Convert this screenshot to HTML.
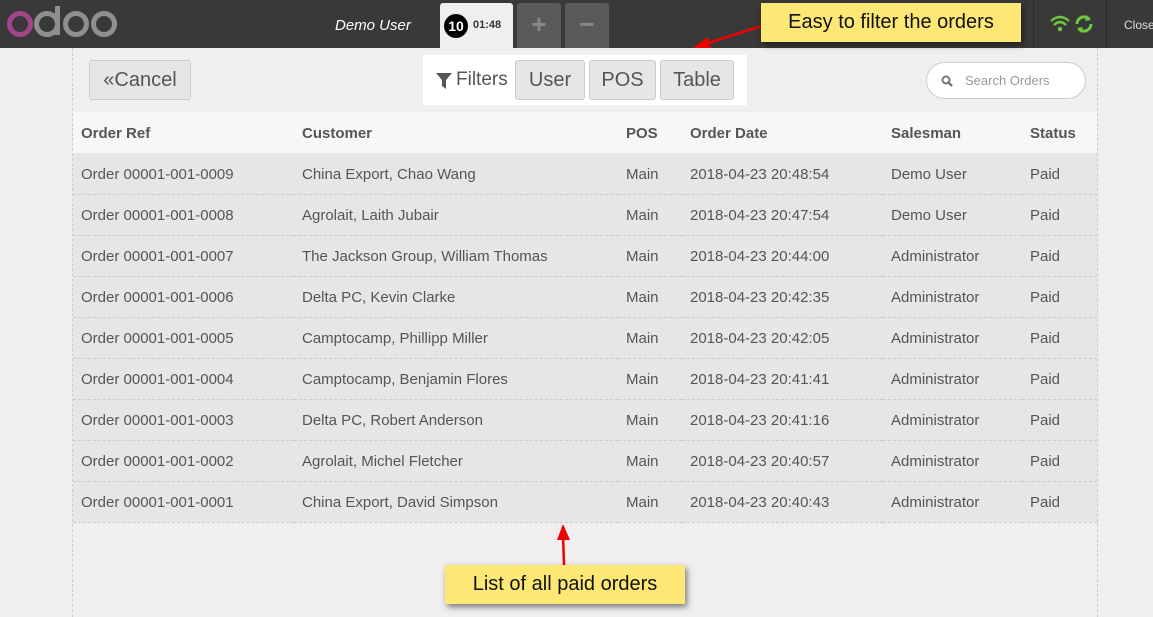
<!DOCTYPE html>
<html><head><style>
*{margin:0;padding:0;box-sizing:border-box}
body{width:1153px;height:617px;overflow:hidden;background:#f0eeee;font-family:"Liberation Sans",sans-serif;position:relative;color:#555}
.hdr{position:absolute;left:0;top:0;width:1153px;height:48px;background:#393939}
.panel{position:absolute;left:72px;top:48px;width:1026px;height:569px;border-left:1px dashed #ccc;border-right:1px dashed #ccc}
.btn{position:absolute;background:#e6e6e6;border:1px solid #ccc;border-radius:3px;font-size:20px;color:#555;text-align:center}
table{position:absolute;left:73px;top:112px;width:1024px;border-collapse:collapse;font-size:15px}
th{height:41px;background:#f7f7f7;text-align:left;font-weight:bold;padding-left:8px;padding-top:2px}
td{height:41px;background:#e6e6e6;padding-left:8px;padding-top:2px;border-bottom:1px dashed #ccc}
.note{position:absolute;background:#fde876;color:#111;font-size:20px;text-align:center;box-shadow:2px 3px 6px rgba(0,0,0,.5)}
</style></head><body>
<div class="hdr">
 <svg style="position:absolute;left:0;top:0" width="125" height="48"><g fill="none" stroke-width="5"><circle cx="20" cy="24" r="10.5" stroke="#a24689"/><circle cx="47" cy="24" r="10.5" stroke="#8f8f8f"/><path d="M57.5 6 V35" stroke="#8f8f8f"/><circle cx="76" cy="24" r="10.5" stroke="#8f8f8f"/><circle cx="104" cy="24" r="10.5" stroke="#8f8f8f"/></g></svg>
 <div style="position:absolute;left:335px;top:17px;font-size:15px;font-style:italic;color:#fff">Demo User</div>
 <div style="position:absolute;left:440px;top:3px;width:73px;height:45px;background:#efefef;border-radius:3px 3px 0 0"><div style="position:absolute;left:4px;top:11px;width:24px;height:24px;border-radius:50%;background:#000;color:#fff;font-weight:bold;font-size:14px;text-align:center;line-height:24px">10</div><div style="position:absolute;left:33px;top:16px;font-size:11px;font-weight:bold;color:#333">01:48</div></div>
 <div style="position:absolute;left:517px;top:3px;width:44px;height:45px;background:#5a5a5a;border-radius:3px 3px 0 0;color:#888;font-size:26px;font-weight:bold;text-align:center;line-height:42px">+</div>
 <div style="position:absolute;left:565px;top:3px;width:44px;height:45px;background:#5a5a5a;border-radius:3px 3px 0 0;color:#888;font-size:26px;font-weight:bold;text-align:center;line-height:42px">−</div>
 <div style="position:absolute;left:1033px;top:0;width:1px;height:48px;background:#2a2a2a"></div>
 <svg style="position:absolute;left:1049px;top:14px" width="44" height="20"><g fill="none" stroke="#6ec83c" stroke-width="2.5"><path d="M2 7 Q11 -1 20 7"/><path d="M5 11 Q11 5 17 11"/></g><circle cx="11" cy="15" r="2.2" fill="#6ec83c"/><path d="M28 10 A7 7 0 0 1 40 5 M42 10 A7 7 0 0 1 30 15" stroke="#6ec83c" stroke-width="3" fill="none"/><path d="M38 1 L42 6 L36 7Z M32 19 L28 14 L34 13Z" fill="#6ec83c"/></svg>
 <div style="position:absolute;left:1106px;top:0;width:1px;height:48px;background:#2a2a2a"></div>
 <div style="position:absolute;left:1124px;top:18px;font-size:12px;color:#ddd">Close</div>
</div>
<div class="panel"></div>
<div class="btn" style="left:89px;top:60px;width:102px;height:40px;line-height:38px">«Cancel</div>
<div style="position:absolute;left:423px;top:55px;width:324px;height:50px;background:#fff"></div>
<svg style="position:absolute;left:436px;top:73px" width="16" height="16"><path d="M0 0 H16 L10 7 V16 L6 13 V7Z" fill="#555"/></svg>
<div style="position:absolute;left:456px;top:69px;font-size:19px;color:#555">Filters</div>
<div class="btn" style="left:515px;top:60px;width:70px;height:40px;line-height:38px">User</div>
<div class="btn" style="left:589px;top:60px;width:67px;height:40px;line-height:38px">POS</div>
<div class="btn" style="left:660px;top:60px;width:74px;height:40px;line-height:38px">Table</div>
<div style="position:absolute;left:926px;top:62px;width:160px;height:37px;background:#fff;border:1px solid #ccc;border-radius:19px;font-size:13px;color:#999;line-height:35px;padding-left:38px">Search Orders<svg style="position:absolute;left:14px;top:12px" width="12" height="12"><circle cx="5" cy="5" r="3.5" stroke="#777" stroke-width="2" fill="none"/><path d="M7.5 7.5 L11 11" stroke="#777" stroke-width="2.5"/></svg></div>
<table>
<tr><th style="width:221px">Order Ref</th><th style="width:324px">Customer</th><th style="width:64px">POS</th><th style="width:201px">Order Date</th><th style="width:139px">Salesman</th><th>Status</th></tr>
<tr><td>Order 00001-001-0009</td><td>China Export, Chao Wang</td><td>Main</td><td>2018-04-23 20:48:54</td><td>Demo User</td><td>Paid</td></tr>
<tr><td>Order 00001-001-0008</td><td>Agrolait, Laith Jubair</td><td>Main</td><td>2018-04-23 20:47:54</td><td>Demo User</td><td>Paid</td></tr>
<tr><td>Order 00001-001-0007</td><td>The Jackson Group, William Thomas</td><td>Main</td><td>2018-04-23 20:44:00</td><td>Administrator</td><td>Paid</td></tr>
<tr><td>Order 00001-001-0006</td><td>Delta PC, Kevin Clarke</td><td>Main</td><td>2018-04-23 20:42:35</td><td>Administrator</td><td>Paid</td></tr>
<tr><td>Order 00001-001-0005</td><td>Camptocamp, Phillipp Miller</td><td>Main</td><td>2018-04-23 20:42:05</td><td>Administrator</td><td>Paid</td></tr>
<tr><td>Order 00001-001-0004</td><td>Camptocamp, Benjamin Flores</td><td>Main</td><td>2018-04-23 20:41:41</td><td>Administrator</td><td>Paid</td></tr>
<tr><td>Order 00001-001-0003</td><td>Delta PC, Robert Anderson</td><td>Main</td><td>2018-04-23 20:41:16</td><td>Administrator</td><td>Paid</td></tr>
<tr><td>Order 00001-001-0002</td><td>Agrolait, Michel Fletcher</td><td>Main</td><td>2018-04-23 20:40:57</td><td>Administrator</td><td>Paid</td></tr>
<tr><td>Order 00001-001-0001</td><td>China Export, David Simpson</td><td>Main</td><td>2018-04-23 20:40:43</td><td>Administrator</td><td>Paid</td></tr>
</table>
<svg style="position:absolute;left:0;top:0" width="1153" height="617"><path d="M762 26 L705 44" stroke="#e00" stroke-width="2.5"/><path d="M693 48 L708 37 L711 48Z" fill="#e00"/><path d="M564 565 L563 535" stroke="#e00" stroke-width="2.5"/><path d="M563 524 L557 540 L570 540Z" fill="#e00"/></svg>
<div class="note" style="left:761px;top:3px;width:260px;height:39px;line-height:39px">Easy to filter the orders</div>
<div class="note" style="left:445px;top:565px;width:240px;height:39px;line-height:39px">List of all paid orders</div>
</body></html>
